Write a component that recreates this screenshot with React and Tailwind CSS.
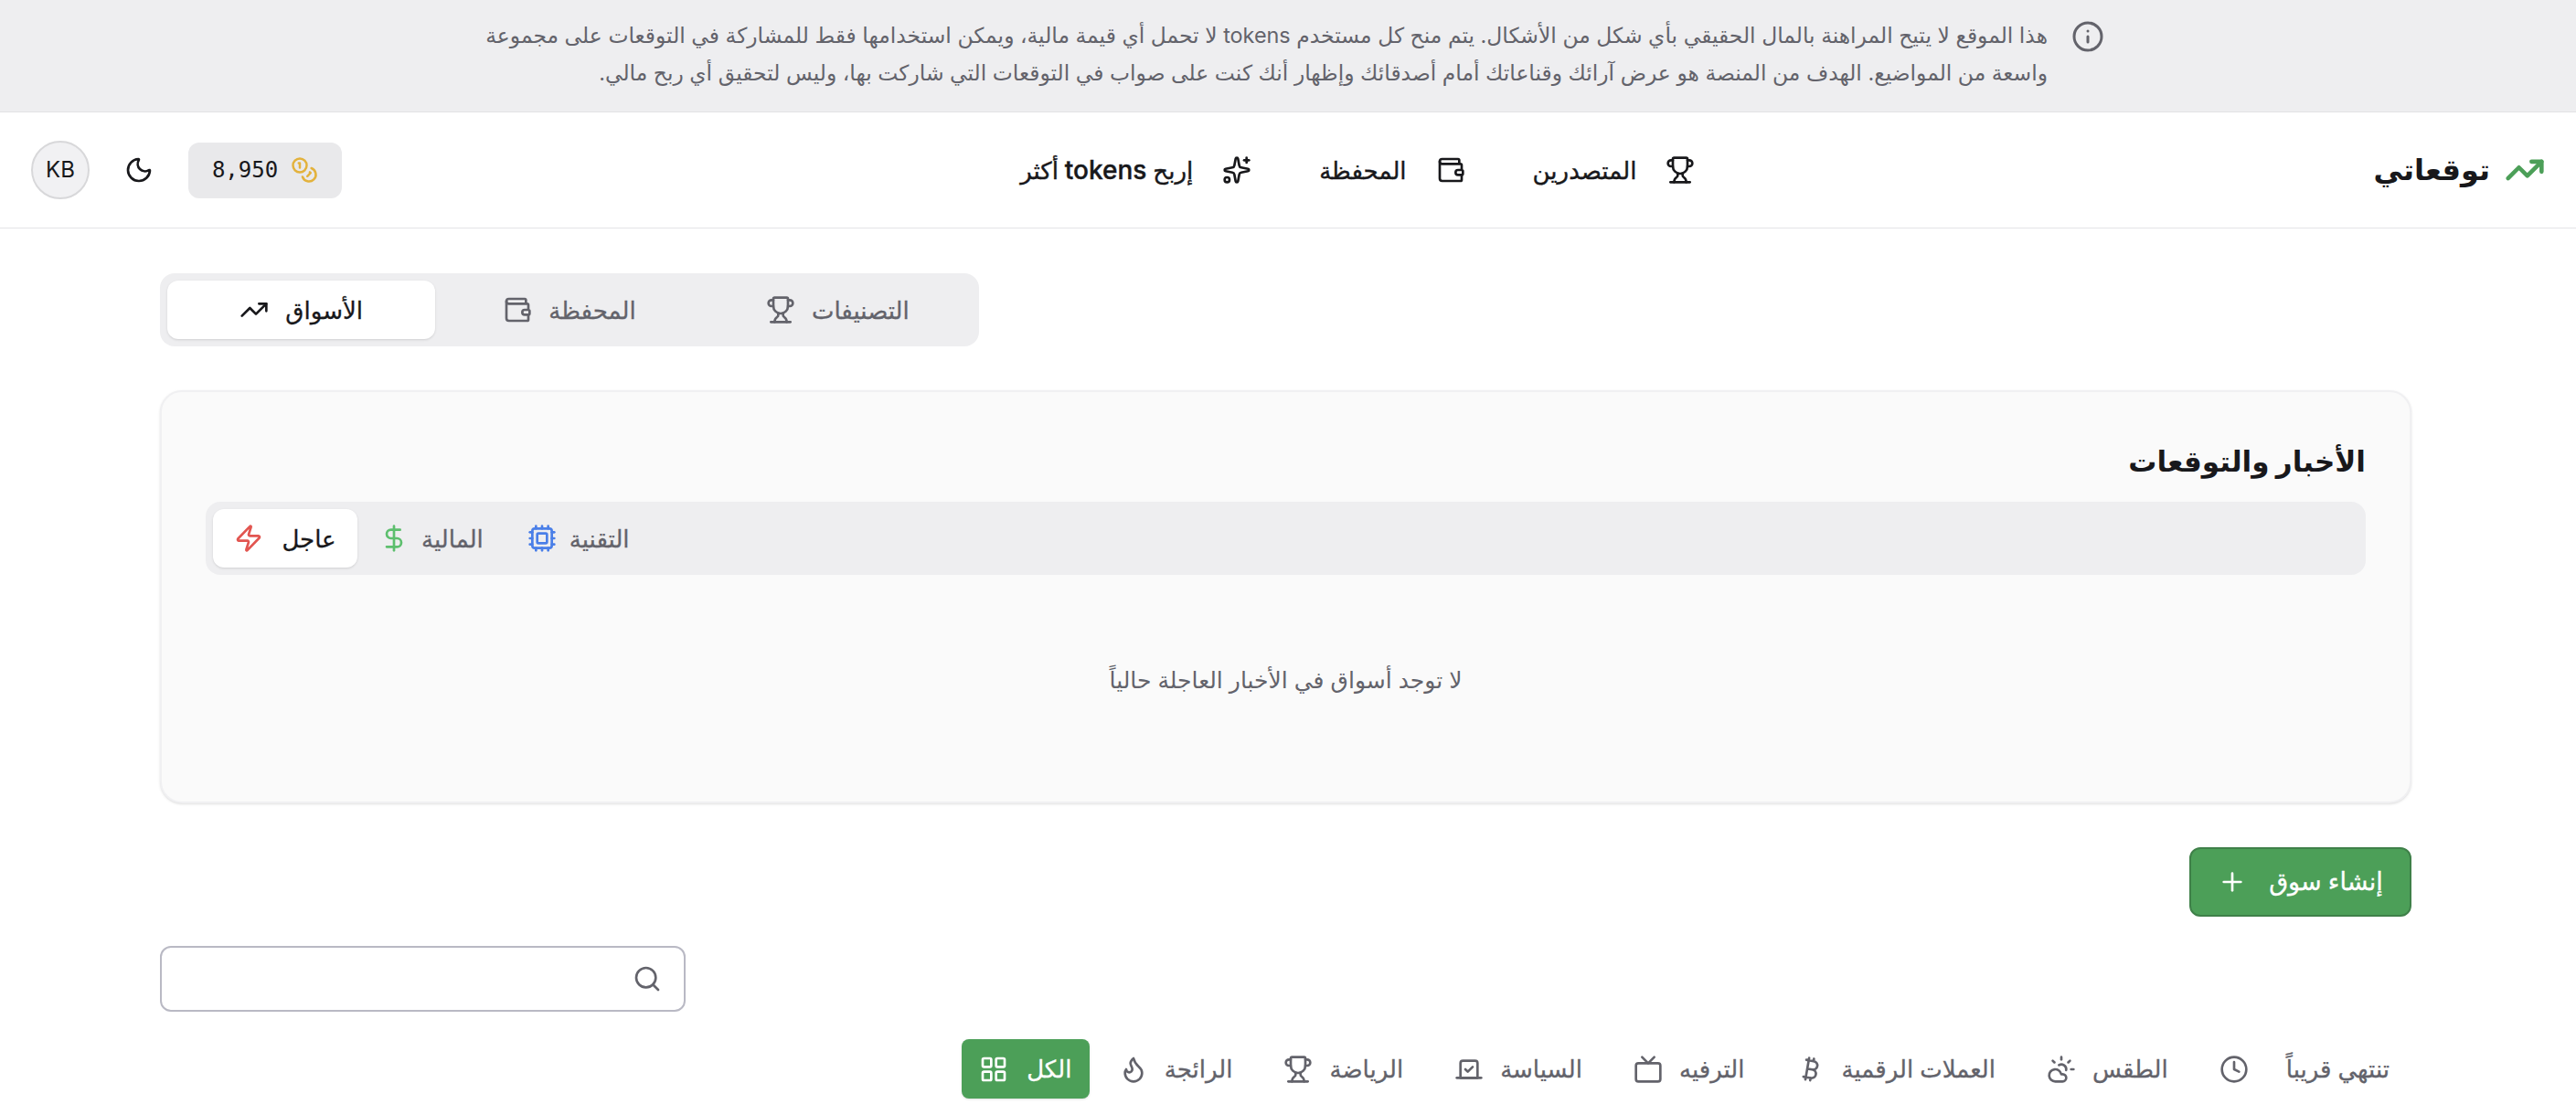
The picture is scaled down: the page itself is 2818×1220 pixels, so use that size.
import { Bitcoin, Clock, CloudSun, Coins, Cpu, DollarSign, Flame, Info, LayoutGrid, Moon, Plus, Search, Sparkles, TrendingUp, Trophy, Tv, Vote, Wallet, Zap } from "lucide-react";

const font = { fontFamily: "Inter, 'Noto Sans', 'DejaVu Sans', sans-serif" };
const mono = { fontFamily: "'DejaVu Sans Mono', monospace" };

const filters = [
  { label: "تنتهي قريباً", icon: Clock, gap: "gap-[41px]" },
  { label: "الطقس", icon: CloudSun, gap: "gap-[18px]" },
  { label: "العملات الرقمية", icon: Bitcoin, gap: "gap-[18px]" },
  { label: "الترفيه", icon: Tv, gap: "gap-[18px]" },
  { label: "السياسة", icon: Vote, gap: "gap-[18px]" },
  { label: "الرياضة", icon: Trophy, gap: "gap-[18px]" },
  { label: "الرائجة", icon: Flame, gap: "gap-[18px]" },
];

function App() {
  return (
    <div dir="rtl" className="min-h-[1220px] bg-white text-[#18181b] overflow-hidden" style={font}>
      <div className="h-[123px] bg-[#eeeef0] border-b border-[#e2e2e4] flex items-center justify-center">
        <div className="w-[1792px] flex gap-[26px] pr-[3px] pb-1 text-[23.4px] leading-[41px] text-[#63636b]">
          <Info className="w-9 h-9 shrink-0 mt-1" strokeWidth={2} />
          <p>
            هذا الموقع لا يتيح المراهنة بالمال الحقيقي بأي شكل من الأشكال. يتم منح كل مستخدم tokens لا تحمل أي قيمة مالية، ويمكن استخدامها فقط للمشاركة في التوقعات على مجموعة واسعة من المواضيع. الهدف من المنصة هو عرض آرائك وقناعاتك أمام أصدقائك وإظهار أنك كنت على صواب في التوقعات التي شاركت بها، وليس لتحقيق أي ربح مالي.
          </p>
        </div>
      </div>

      <header className="h-[127px] border-b border-[#e4e4e7] flex items-center justify-between px-[34px]">
        <div className="flex items-center gap-4">
          <TrendingUp className="w-11 h-11 text-[#4c9f58]" strokeWidth={2.5} />
          <span className="text-[32px] font-bold">توقعاتي</span>
        </div>
        <nav className="flex items-center gap-[74px] text-[26px] font-medium [-webkit-text-stroke:0.4px_currentColor]">
          <a className="flex items-center gap-8">
            <Trophy className="w-8 h-8" strokeWidth={2} />
            المتصدرين
          </a>
          <a className="flex items-center gap-8">
            <Wallet className="w-8 h-8" strokeWidth={2} />
            المحفظة
          </a>
          <a className="flex items-center gap-8">
            <Sparkles className="w-8 h-8" strokeWidth={2} />
            <span>إربح <span className="text-[28px]">tokens</span> أكثر</span>
          </a>
        </nav>
        <div className="flex items-center gap-[38px]">
          <div className="h-[61px] w-[168px] rounded-xl bg-[#e9e9eb] flex items-center justify-center gap-[14px]">
            <Coins className="w-[30px] h-[30px] text-[#e3b23c]" strokeWidth={2} />
            <span className="text-[24px] font-medium" dir="ltr" style={mono}>8,950</span>
          </div>
          <Moon className="w-8 h-8" strokeWidth={2} />
          <div className="w-16 h-16 rounded-full bg-[#f1f1f3] border-2 border-[#d8d8da] flex items-center justify-center text-[24px]">KB</div>
        </div>
      </header>

      <main className="pl-[175px] pr-[180px]">
        <div className="flex justify-end mt-[49px]">
          <div className="w-[896px] h-20 bg-[#eeeef0] rounded-2xl p-2 flex text-[26px] font-medium text-[#63636b] [-webkit-text-stroke:0.3px_currentColor]">
            <button className="flex-1 flex items-center justify-center gap-[18px]">
              التصنيفات
              <Trophy className="w-8 h-8" strokeWidth={2} />
            </button>
            <button className="flex-1 flex items-center justify-center gap-[18px]">
              المحفظة
              <Wallet className="w-8 h-8" strokeWidth={2} />
            </button>
            <button className="flex-1 flex items-center justify-center gap-[18px] bg-white rounded-xl shadow-sm text-[#18181b]">
              الأسواق
              <TrendingUp className="w-8 h-8" strokeWidth={2} />
            </button>
          </div>
        </div>

        <section className="mt-12 h-[452px] bg-[#fafafa] border-2 border-[#f0f0f2] rounded-3xl px-12 pt-[51px] shadow-sm">
          <h2 className="text-[31px] font-bold leading-[50px]">الأخبار والتوقعات</h2>
          <div className="mt-[19px] h-20 bg-[#eeeef0] rounded-2xl p-2 flex flex-row-reverse text-[26px] font-medium text-[#63636b] [-webkit-text-stroke:0.3px_currentColor]">
            <button className="h-16 w-[158px] flex items-center justify-center gap-5 bg-white rounded-xl shadow-sm text-[#18181b]">
              عاجل
              <Zap className="w-8 h-8 text-[#e25550]" strokeWidth={2} />
            </button>
            <button className="h-16 px-6 flex items-center justify-center gap-[14px]">
              المالية
              <DollarSign className="w-8 h-8 text-[#5dbf6e]" strokeWidth={2} />
            </button>
            <button className="h-16 px-6 flex items-center justify-center gap-[14px]">
              التقنية
              <Cpu className="w-8 h-8 text-[#4a7fe8]" strokeWidth={2} />
            </button>
          </div>
          <p className="mt-[97px] text-center text-[25px] text-[#63636b]">لا توجد أسواق في الأخبار العاجلة حالياً</p>
        </section>

        <div className="mt-12 flex justify-start">
          <button className="h-[76px] w-[243px] bg-[#4c9f58] border-2 border-[#3f8049] rounded-xl text-white text-[27px] font-medium flex items-center justify-center gap-6 [-webkit-text-stroke:0.3px_currentColor]">
            إنشاء سوق
            <Plus className="w-8 h-8" strokeWidth={2} />
          </button>
        </div>

        <div className="mt-[32px] flex justify-end">
          <div className="w-[575px] h-[72px] border-2 border-[#b9b9c4] rounded-xl flex items-center pr-[24px]">
            <Search className="w-8 h-8 text-[#63636b]" strokeWidth={2} />
          </div>
        </div>

        <div className="mt-[30px] flex items-center gap-2 text-[26px] font-medium text-[#63636b] [-webkit-text-stroke:0.3px_currentColor]">
          {filters.map(({ label, icon: Icon, gap }) => (
            <button key={label} className={`h-[65px] px-6 flex items-center ${gap}`}>
              {label}
              <Icon className="w-8 h-8" strokeWidth={2} />
            </button>
          ))}
          <button className="h-[65px] w-[140px] bg-[#4c9f58] rounded-lg text-white flex items-center justify-center gap-5 shadow-sm">
            الكل
            <LayoutGrid className="w-8 h-8" strokeWidth={2} />
          </button>
        </div>
      </main>
    </div>
  );
}

export default App;
